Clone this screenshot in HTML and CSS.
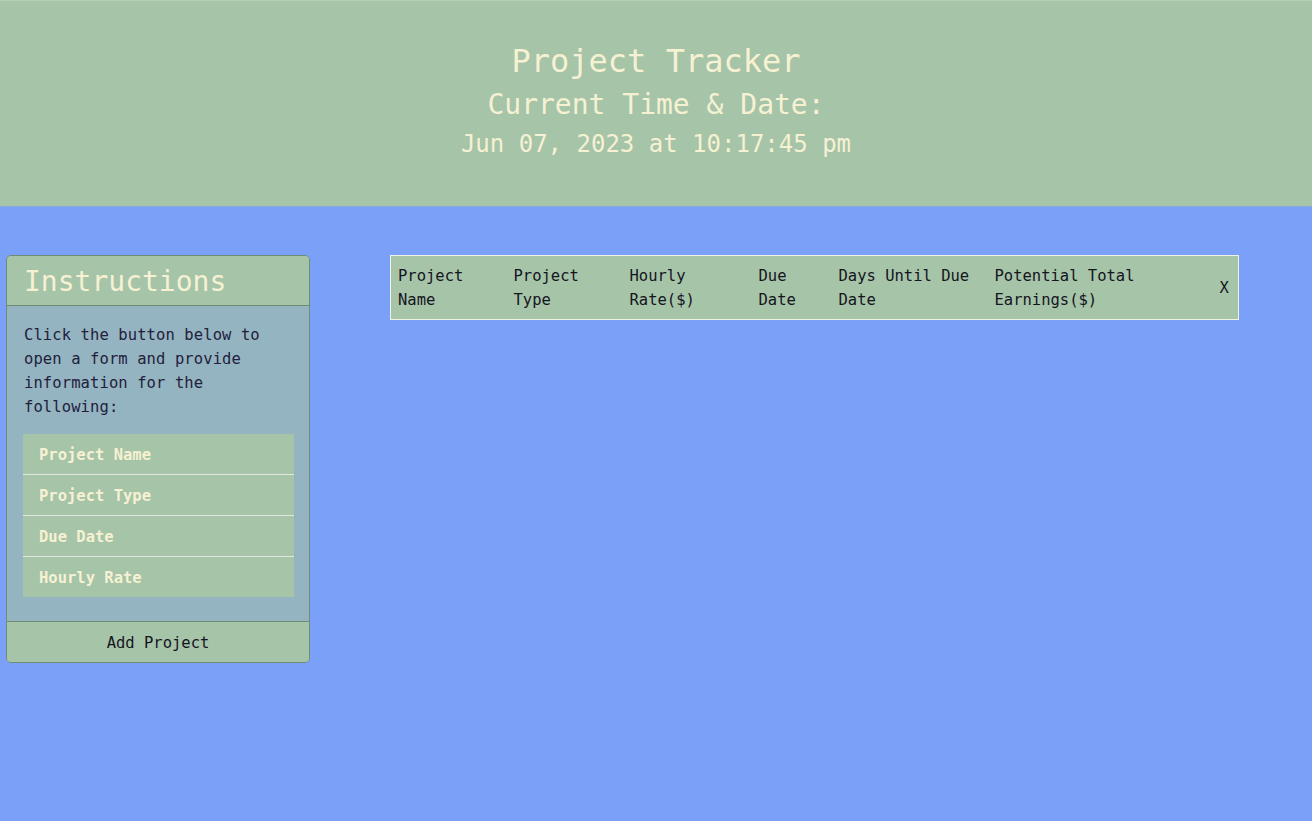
FILE: index.html
```html
<!DOCTYPE html>
<html lang="en">
<head>
<meta charset="utf-8">
<title>Project Tracker</title>
<link rel="stylesheet" href="styles.css">
</head>
<body>
<header class="site-header">
  <h1 class="title">Project Tracker</h1>
  <h2 class="subtitle">Current Time &amp; Date:</h2>
  <h3 class="clock">Jun 07, 2023 at 10:17:45 pm</h3>
</header>
<main class="main">
  <section class="card">
    <div class="card-header">Instructions</div>
    <div class="card-body">
      <p class="card-text">Click the button below to open a form and provide information for the following:</p>
      <ul class="list">
        <li class="list-item">Project Name</li>
        <li class="list-item">Project Type</li>
        <li class="list-item">Due Date</li>
        <li class="list-item">Hourly Rate</li>
      </ul>
    </div>
    <div class="card-footer"><button class="add-btn" type="button">Add Project</button></div>
  </section>
  <section class="table-wrap">
    <table class="projects">
      <colgroup>
        <col class="c1"><col class="c2"><col class="c3"><col class="c4"><col class="c5"><col class="c6"><col class="c7">
      </colgroup>
      <thead>
        <tr>
          <th>Project Name</th>
          <th>Project Type</th>
          <th>Hourly Rate($)</th>
          <th>Due Date</th>
          <th>Days Until Due Date</th>
          <th>Potential Total Earnings($)</th>
          <th class="x">X</th>
        </tr>
      </thead>
    </table>
  </section>
</main>
</body>
</html>
```
FILE: styles.css
```css
* { box-sizing: border-box; }
html, body { margin: 0; padding: 0; }
body {
  background: #7ba0f8;
  font-family: "DejaVu Sans Mono", "Liberation Mono", monospace;
  color: #1f2230;
  min-height: 821px;
}
.site-header {
  background: #a6c4a8;
  border-top: 1px solid #b5cfb6;
  border-bottom: 1px solid #8aa8d8;
  height: 207px;
  padding-top: 41px;
  text-align: center;
  color: #f6f1d3;
}
.title {
  margin: 0;
  font-size: 32px;
  line-height: 38px;
  font-weight: normal;
}
.subtitle {
  margin: 8px 0 0;
  font-size: 28px;
  line-height: 34px;
  font-weight: normal;
}
.clock {
  margin: 8px 0 0;
  font-size: 24px;
  line-height: 29px;
  font-weight: normal;
}
.main {
  display: flex;
  align-items: flex-start;
  padding: 48px 0 0 6px;
  gap: 80px;
}
.card {
  width: 304px;
  border: 1px solid #6f8d72;
  border-radius: 5px;
  background: #94b4c2;
  overflow: hidden;
}
.card-header {
  background: #a6c4a8;
  height: 50px;
  border-bottom: 1px solid #6f8d72;
  padding: 1px 16px 0 17px;
  font-size: 28px;
  line-height: 49px;
  color: #f6f1d3;
  font-weight: 300;
}
.card-body {
  padding: 17px 15px 23px 16px;
}
.card-text {
  margin: 0 0 15px 1px;
  font-size: 15.5px;
  line-height: 24px;
  letter-spacing: 0.1px;
  color: #23213a;
}
.list {
  list-style: none;
  margin: 0 0 1px;
  padding: 0;
  background: #a6c4a8;
}
.list-item {
  padding: 9px 16px 7px;
  height: 41px;
  font-size: 15.5px;
  line-height: 24px;
  font-weight: bold;
  color: #f6f1d3;
  border-top: 1px solid #e1e8df;
}
.list-item:first-child { border-top: none; height: 40px; }
.card-footer {
  background: #a6c4a8;
  border-top: 1px solid #6f8d72;
  height: 41px;
  padding-top: 2px;
  display: flex;
  align-items: center;
  justify-content: center;
}
.add-btn {
  background: none;
  border: none;
  font-family: inherit;
  font-size: 15.5px;
  color: #15151f;
  padding: 0;
  cursor: pointer;
}
.projects {
  width: 848px;
  table-layout: fixed;
  border-collapse: collapse;
  background: #a6c4a8;
  border: 1px solid #eef3e6;
}
.c1 { width: 116px; }
.c2 { width: 116px; }
.c3 { width: 129px; }
.c4 { width: 80px; }
.c5 { width: 156px; }
.c6 { width: 226px; }
.c7 { width: 25px; }
.projects th {
  text-align: left;
  font-weight: normal;
  font-size: 15.5px;
  line-height: 24px;
  padding: 8px 7px 7px;
  color: #15151f;
  vertical-align: middle;
}
.projects th.x { padding: 8px 6px 7px; }
```
